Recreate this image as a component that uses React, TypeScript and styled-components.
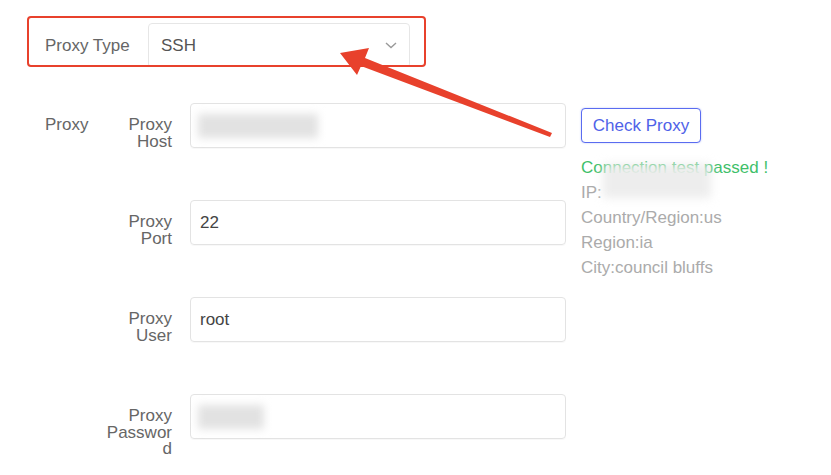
import { styled, createGlobalStyle } from 'styled-components';

const GlobalStyle = createGlobalStyle`
  body {
    margin: 0;
    background: #ffffff;
    font-family: "Liberation Sans", Arial, sans-serif;
  }
`;

const fields = [
  { label: 'Proxy Host', value: '', redacted: 120 },
  { label: 'Proxy Port', value: '22' },
  { label: 'Proxy User', value: 'root' },
  { label: 'Proxy Password', value: '', redacted: 66 },
];

const results = ['Country/Region:us', 'Region:ia', 'City:council bluffs'];

export default function App() {
  return (
    <Page>
      <GlobalStyle />
      <Highlight>
        <TypeLabel>Proxy Type</TypeLabel>
        <Select>
          <span>SSH</span>
          <svg width="12" height="7" viewBox="0 0 12 7">
            <polyline points="1,1 6,5.5 11,1" fill="none" stroke="#9a9a9a" strokeWidth="1.4" />
          </svg>
        </Select>
      </Highlight>

      <Section>
        <SectionLabel>Proxy</SectionLabel>
        <FieldList>
          {fields.map((f) => (
            <Row key={f.label}>
              <FieldLabel>{f.label}</FieldLabel>
              <Input>
                {f.redacted ? <Blur style={{ width: f.redacted }} /> : f.value}
              </Input>
            </Row>
          ))}
        </FieldList>
        <Side>
          <CheckButton>Check Proxy</CheckButton>
          <Results>
            <Passed>Connection test passed !</Passed>
            <Line>
              IP:<IpBlur />
            </Line>
            {results.map((r) => (
              <Line key={r}>{r}</Line>
            ))}
          </Results>
        </Side>
      </Section>

      <Arrow width="831" height="475" viewBox="0 0 831 475">
        <polygon
          points="340,53 369,48 365,58 552,133 550,137 361,66 357,75"
          fill="#e8412c"
        />
      </Arrow>
    </Page>
  );
}

const Page = styled.div`
  position: relative;
  width: 831px;
  height: 475px;
  overflow: hidden;
  padding: 16px 0 0 27px;
  box-sizing: border-box;
  font-size: 17px;
`;

const Highlight = styled.div`
  display: flex;
  align-items: flex-start;
  width: 399px;
  height: 51px;
  box-sizing: border-box;
  border: 2px solid #e8412c;
  border-radius: 4px;
  padding: 5px 0 0 16px;
  overflow: hidden;
`;

const TypeLabel = styled.div`
  width: 103px;
  line-height: 45px;
  color: #666;
`;

const Select = styled.div`
  display: flex;
  align-items: center;
  justify-content: space-between;
  width: 262px;
  height: 45px;
  box-sizing: border-box;
  flex-shrink: 0;
  padding: 0 12px 0 12px;
  border: 1px solid #e6e6e6;
  border-radius: 4px;
  color: #555;
`;

const Section = styled.div`
  display: flex;
  align-items: flex-start;
  margin-top: 36px;
  padding-left: 18px;
`;

const SectionLabel = styled.div`
  width: 61px;
  padding-top: 14px;
  line-height: 16.5px;
  color: #666;
`;

const FieldList = styled.div`
  display: flex;
  flex-direction: column;
  gap: 52px;
`;

const Row = styled.div`
  display: flex;
  align-items: flex-start;
  gap: 18px;
  height: 45px;
`;

const FieldLabel = styled.div`
  width: 66px;
  padding-top: 14px;
  text-align: right;
  overflow-wrap: anywhere;
  line-height: 16.5px;
  color: #666;
`;

const Input = styled.div`
  display: flex;
  align-items: center;
  width: 376px;
  height: 45px;
  box-sizing: border-box;
  padding: 0 9px;
  border: 1px solid #e3e3e3;
  border-radius: 4px;
  box-shadow: 0 1px 1px rgba(0, 0, 0, 0.03);
  color: #444;
`;

const Blur = styled.span`
  display: block;
  height: 24px;
  margin-left: -2px;
  background: #e2e2e2;
  filter: blur(4px);
`;

const Side = styled.div`
  display: flex;
  flex-direction: column;
  margin-left: 15px;
  padding-top: 5px;
`;

const CheckButton = styled.button`
  width: 120px;
  height: 35px;
  padding: 0;
  background: #fff;
  border: 1.5px solid #5a6cf0;
  border-radius: 4px;
  box-shadow: 0 0 2px rgba(90, 108, 240, 0.4);
  font-family: inherit;
  font-size: 17px;
  color: #4f62e8;
`;

const Results = styled.div`
  margin-top: 12px;
  line-height: 25px;
  color: #ababab;
`;

const Passed = styled.div`
  color: #3fbf6a;
`;

const Line = styled.div`
  position: relative;
  white-space: nowrap;
`;

const IpBlur = styled.span`
  position: absolute;
  left: 22px;
  top: -16px;
  width: 108px;
  height: 34px;
  background: rgba(236, 236, 236, 0.95);
  filter: blur(5px);
`;

const Arrow = styled.svg`
  position: absolute;
  left: 0;
  top: 0;
  pointer-events: none;
`;
